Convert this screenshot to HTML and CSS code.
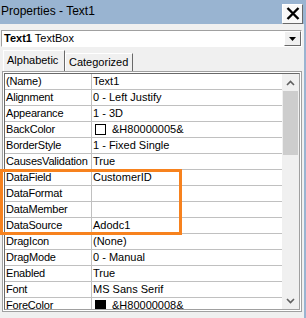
FILE: index.html
```html
<!DOCTYPE html>
<html lang="en">
<head>
    <meta charset="UTF-8">
    <title>Properties - Text1</title>
    <link rel="stylesheet" href="styles.css">
</head>
<body>
<div class="window">
    <div class="titlebar">
        <span class="title">Properties - Text1</span>
        <div class="btn_close">
            <svg width="14" height="13" viewBox="0 0 14 13"><path d="M1.5 1 L12.5 12 M12.5 1 L1.5 12" stroke="#000" stroke-width="2.4"/></svg>
        </div>
    </div>
    <div class="combo">
        <div class="combo_text"><b>Text1</b> TextBox</div>
        <div class="combo_btn">
            <svg width="7" height="4" viewBox="0 0 7 4"><path d="M0 0 H7 L3.5 4 Z" fill="#000"/></svg>
        </div>
    </div>
    <div class="tabs">
        <div class="tab tab_active">Alphabetic</div>
        <div class="tab">Categorized</div>
    </div>
    <div class="grid_frame">
        <div class="grid">
            <div class="rows">
                <div class="row"><div class="name">(Name)</div><div class="value">Text1</div></div>
                <div class="row"><div class="name">Alignment</div><div class="value">0 - Left Justify</div></div>
                <div class="row"><div class="name">Appearance</div><div class="value">1 - 3D</div></div>
                <div class="row"><div class="name">BackColor</div><div class="value"><span class="swatch swatch_white"></span>&amp;H80000005&amp;</div></div>
                <div class="row"><div class="name">BorderStyle</div><div class="value">1 - Fixed Single</div></div>
                <div class="row"><div class="name">CausesValidation</div><div class="value">True</div></div>
                <div class="row"><div class="name">DataField</div><div class="value">CustomerID</div></div>
                <div class="row"><div class="name">DataFormat</div><div class="value"></div></div>
                <div class="row"><div class="name">DataMember</div><div class="value"></div></div>
                <div class="row"><div class="name">DataSource</div><div class="value">Adodc1</div></div>
                <div class="row"><div class="name">DragIcon</div><div class="value">(None)</div></div>
                <div class="row"><div class="name">DragMode</div><div class="value">0 - Manual</div></div>
                <div class="row"><div class="name">Enabled</div><div class="value">True</div></div>
                <div class="row"><div class="name">Font</div><div class="value">MS Sans Serif</div></div>
                <div class="row"><div class="name">ForeColor</div><div class="value"><span class="swatch swatch_black"></span>&amp;H80000008&amp;</div></div>
            </div>
            <div class="scrollbar">
                <div class="arrow">
                    <svg width="9" height="6" viewBox="0 0 9 6"><path d="M1 5 L4.5 1.5 L8 5" stroke="#606060" stroke-width="1.6" fill="none"/></svg>
                </div>
                <div class="thumb"></div>
                <div class="track"></div>
                <div class="arrow">
                    <svg width="9" height="6" viewBox="0 0 9 6"><path d="M1 1 L4.5 4.5 L8 1" stroke="#606060" stroke-width="1.6" fill="none"/></svg>
                </div>
            </div>
        </div>
    </div>
    <div class="highlight"></div>
</div>
</body>
</html>
```

FILE: styles.css
```css
body{
    margin: 0;
    font-family: "Liberation Sans", Arial, sans-serif;
}
.window{
    position: relative;
    box-sizing: border-box;
    width: 306px;
    height: 318px;
    background-color: #f0f0f0;
    border-right: 2px solid #99b4d1;
    overflow: hidden;
}
.titlebar{
    height: 24px;
    background-color: #99b4d1;
    display: flex;
    justify-content: space-between;
    align-items: center;
    margin-right: -2px;
}
.titlebar>.title{
    padding-left: 1px;
    padding-bottom: 3px;
    font-size: 12px;
    color: #000;
}
.titlebar>.btn_close{
    box-sizing: border-box;
    width: 21px;
    height: 20px;
    margin-right: 3px;
    margin-top: 3px;
    background-color: #f8f8f8;
    border: 1px solid;
    border-color: #ffffff #696969 #696969 #ffffff;
    display: flex;
    align-items: center;
    justify-content: center;
}
.combo{
    box-sizing: border-box;
    height: 17px;
    margin: 6px 2px 0 1px;
    background-color: white;
    border: 1px solid;
    border-color: #a0a0a0 #ffffff #ffffff #a0a0a0;
    display: flex;
    justify-content: space-between;
}
.combo>.combo_text{
    padding-left: 2px;
    font-size: 11px;
    line-height: 15px;
}
.combo>.combo_btn{
    box-sizing: border-box;
    width: 17px;
    height: 15px;
    background-color: #f0f0f0;
    border: 1px solid;
    border-color: #ffffff #696969 #696969 #ffffff;
    display: flex;
    align-items: center;
    justify-content: center;
}
.tabs{
    display: flex;
    align-items: flex-end;
    height: 21px;
    margin-top: 3px;
    padding-left: 3px;
}
.tab{
    box-sizing: border-box;
    height: 18px;
    padding: 0 3px;
    font-size: 11px;
    line-height: 16px;
    border: 1px solid;
    border-bottom: 0;
    border-color: #ffffff #696969 #ffffff #ffffff;
    white-space: nowrap;
}
.tab_active{
    height: 21px;
    width: 62px;
    line-height: 19px;
}
.tabs>.tab:nth-child(2){
    width: 68px;
}
.grid_frame{
    box-sizing: border-box;
    height: 241px;
    margin: 0 2px 0 2px;
    border: 1px solid #a0a0a0;
    padding: 1px;
    background-color: #ffffff;
}
.grid{
    box-sizing: border-box;
    height: 100%;
    border: 1px solid;
    border-color: #696969 #a0a0a0 #a0a0a0 #696969;
    display: flex;
    overflow: hidden;
}
.rows{
    flex: 1;
    background-color: white;
}
.row{
    display: flex;
    height: 16px;
    box-sizing: border-box;
    border-bottom: 1px solid #c0c0c0;
    font-size: 11px;
    line-height: 15px;
}
.row>.name{
    box-sizing: border-box;
    width: 87px;
    padding-left: 1px;
    border-right: 1px solid #c0c0c0;
    white-space: nowrap;
    overflow: hidden;
    letter-spacing: -0.2px;
}
.row>.value{
    flex: 1;
    padding-left: 1px;
    white-space: nowrap;
    display: flex;
    align-items: center;
}
.swatch{
    box-sizing: border-box;
    width: 11px;
    height: 11px;
    margin: 0 6px 0 2px;
    border: 1px solid #000;
}
.swatch_white{
    background-color: white;
}
.swatch_black{
    background-color: black;
}
.scrollbar{
    width: 17px;
    background-color: #f0f0f0;
    display: flex;
    flex-direction: column;
}
.scrollbar>.arrow{
    height: 17px;
    display: flex;
    align-items: center;
    justify-content: center;
}
.scrollbar>.thumb{
    height: 64px;
    margin: 0 1px;
    background-color: #cdcdcd;
}
.scrollbar>.track{
    flex: 1;
}
.highlight{
    position: absolute;
    left: 0;
    top: 169px;
    width: 176px;
    height: 60px;
    border: 3px solid #f7821e;
}
```
